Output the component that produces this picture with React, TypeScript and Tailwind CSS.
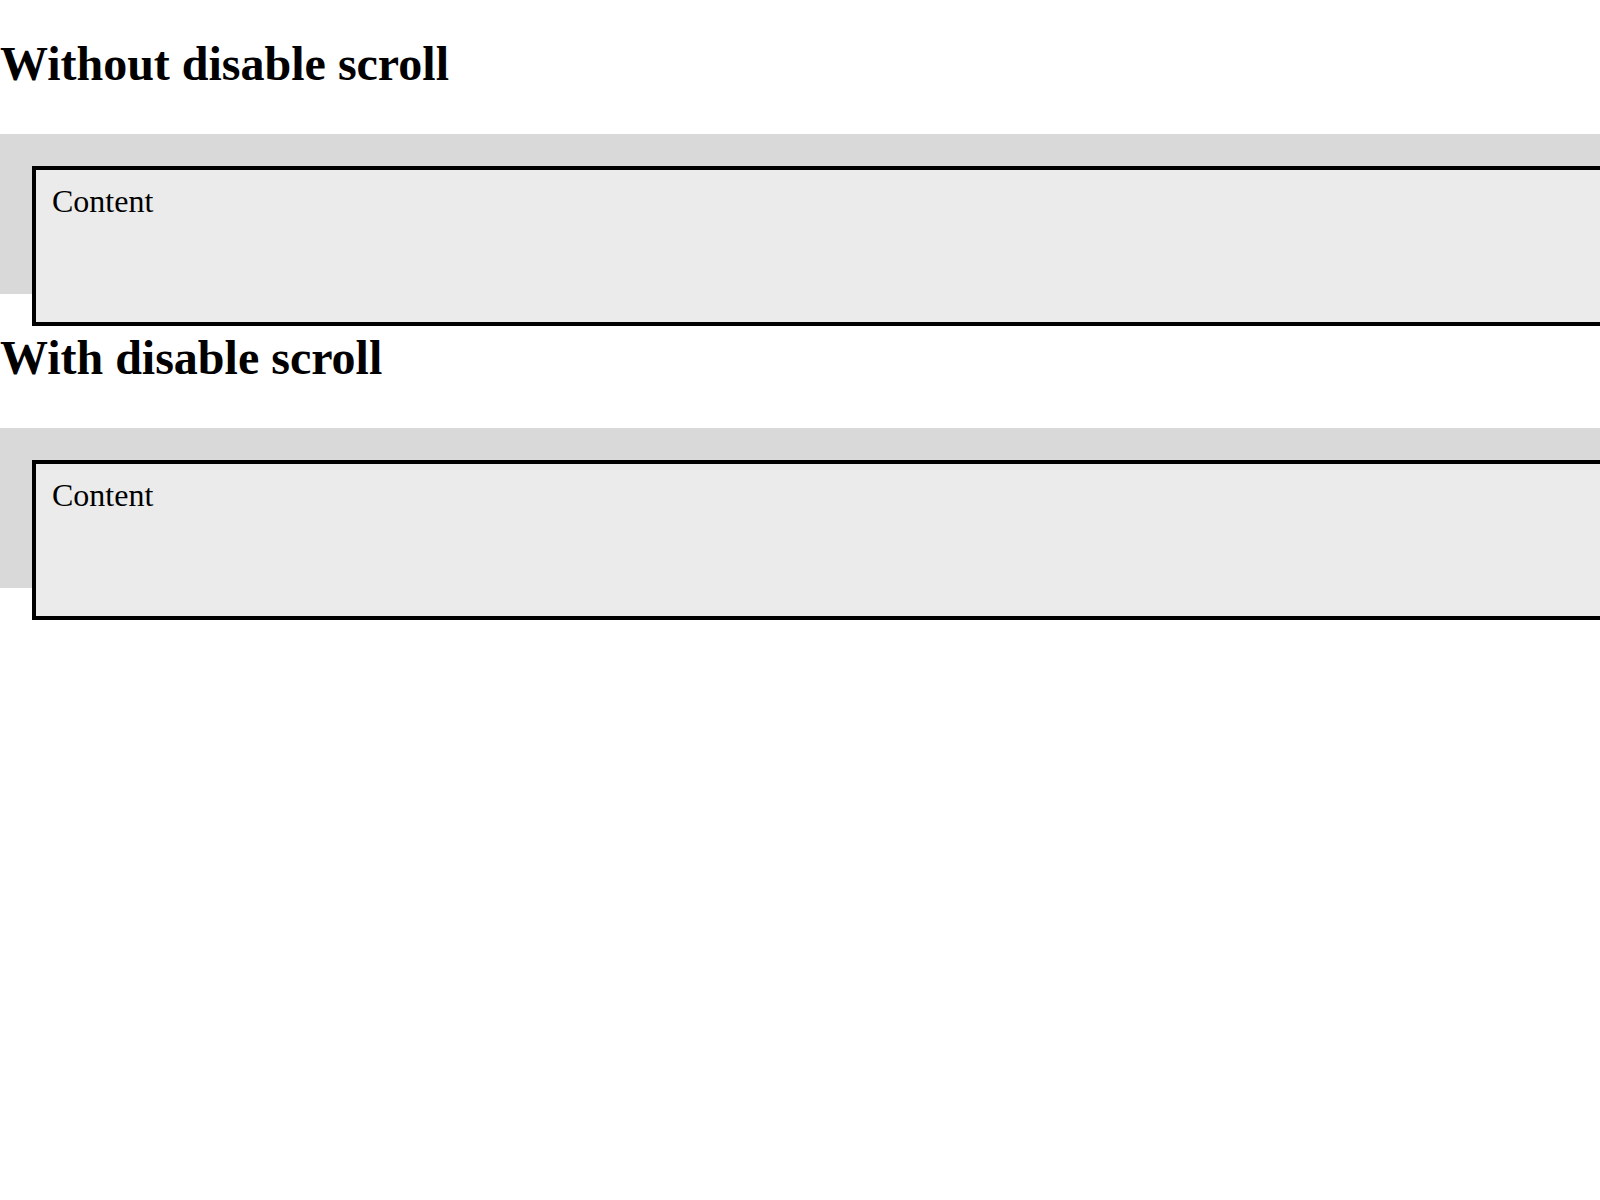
// ---------- Section ----------
const Section: React.FC<{ title: string }> = ({ title }) => (
  <section>
    <h1 className="mt-[36px] mb-[42px] text-[48px] leading-[56px] font-bold">{title}</h1>
    <div className="h-[160px] bg-[#d9d9d9] pt-[32px] pl-[32px]">
      <div className="h-[160px] w-[1600px] border-4 border-black bg-[#ebebeb] px-[16px] pt-[13px]">
        <p className="text-[32px] leading-[36px]">Content</p>
      </div>
    </div>
  </section>
);

// ---------- App ----------
export default function App() {
  return (
    <div className="w-full min-h-[1200px] overflow-hidden bg-white text-black font-['Liberation_Serif',serif]">
      <Section title="Without disable scroll" />
      <Section title="With disable scroll" />
    </div>
  );
}
